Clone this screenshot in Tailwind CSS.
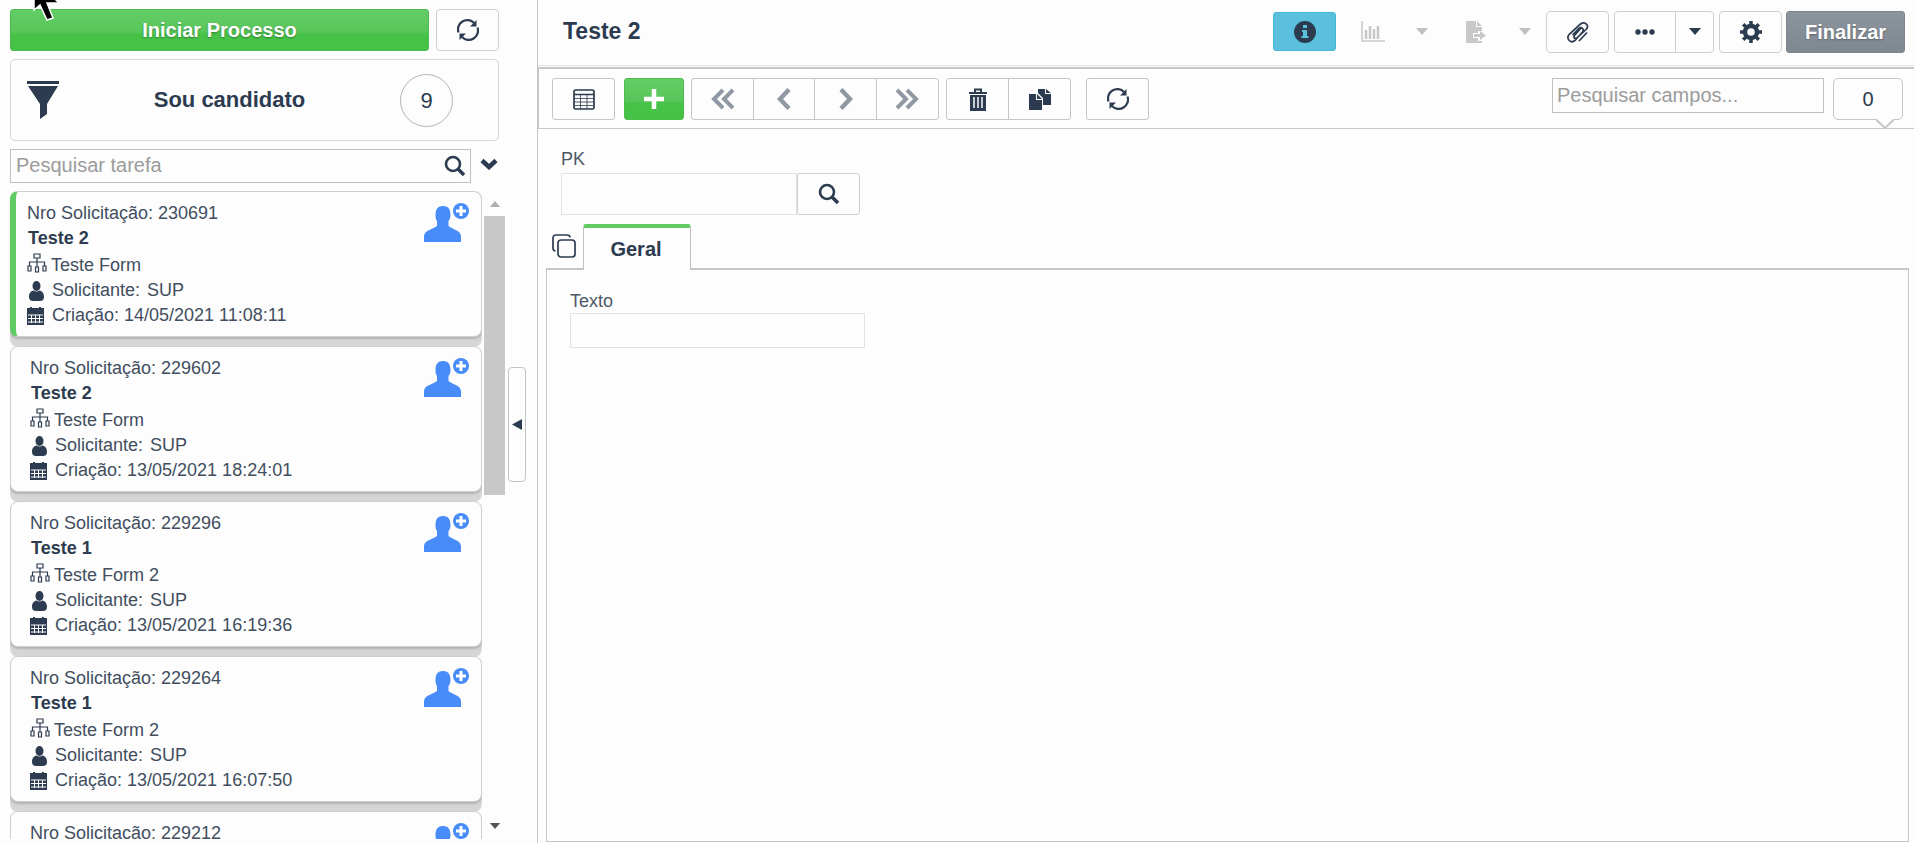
<!DOCTYPE html>
<html lang="pt-BR">
<head>
  <meta charset="UTF-8">
  <meta name="viewport" content="width=device-width, initial-scale=1.0">
  <title>Sou candidato - Teste 2</title>
  <script src="https://cdn.jsdelivr.net/npm/@tailwindcss/browser@4"></script>
</head>
<body class="relative flex h-screen overflow-hidden bg-[#fdfdfd] font-['Liberation_Sans',Arial,sans-serif] text-[18px] text-[#2c3b4f]">

  <!-- Icons -->
  <svg class="hidden">
    <symbol id="i-refresh" viewBox="0 0 22 22">
      <path d="M1.500 13.500A9.300 9.300 0 0 1 17 4M20.500 8.500A9.300 9.300 0 0 1 5 18" fill="none" stroke="currentColor" stroke-width="2.200"/>
      <path d="M19.500 1V7.500H13zM2.500 21V14.500H9z" fill="currentColor"/>
    </symbol>
    <symbol id="i-search" viewBox="0 0 22 22">
      <circle cx="9" cy="9" r="7" fill="none" stroke="currentColor" stroke-width="2.600"/>
      <path d="M13.500 13.500L20 20" stroke="currentColor" stroke-width="3.600"/>
    </symbol>
    <symbol id="i-caret" viewBox="0 0 12 7"><path d="M0 0H12L6 7z" fill="currentColor"/></symbol>
    <symbol id="i-sitemap" viewBox="0 0 20 20">
      <path d="M7 1h6v4H7zM1 13h3v5H1zM8.500 14h3v5h-3zM16 13h3v5h-3zM10 5v9M2.500 13V9h15v4" fill="none" stroke="currentColor" stroke-width="1.200"/>
    </symbol>
    <symbol id="i-user" viewBox="0 0 20 20">
      <ellipse cx="9.500" cy="5" rx="4" ry="5" fill="currentColor"/>
      <path d="M2 16c0-4 2-6 4.500-6.500q3 2 6 0c2.500.5 4.500 2.500 4.500 6.500 0 3-2 4-4 4h-7c-2 0-4-1-4-4z" fill="currentColor"/>
    </symbol>
    <symbol id="i-calendar" viewBox="0 0 20 20">
      <path d="M0 2h3V1h2v1h7V1h2v1h3v17H0z" fill="currentColor"/>
      <path d="M1 9h15M1 12.500h15M1 16h15M4.500 9v8M8.500 9v8M12.500 9v8" stroke="#fff" stroke-width="1"/>
    </symbol>
    <symbol id="i-adduser" viewBox="0 0 46 40">
      <path d="M11.500 12C11.500 6 14 3 19 3s7.500 3 7.500 9c0 3-1 5-2 6v5c3 3 12 4 12.500 10v6H0v-6c.5-6 9.500-7 13-10v-5c-1-1-1.500-3-1.500-6z" fill="currentColor"/>
      <circle cx="37" cy="8" r="8" fill="currentColor"/>
      <path d="M37 3v10M32 8h10" stroke="#fff" stroke-width="3"/>
    </symbol>
  </svg>

  <!-- Task sidebar -->
  <aside class="flex w-[538px] shrink-0 border-r border-[#c6c6c6]">
    <div class="flex w-[505px] flex-col pt-[9px] pb-1 pl-[10px]">
      <div class="flex gap-[7px] pr-[6px]">
        <button class="h-[42px] flex-1 rounded-[3px] border border-[#4abb4c] bg-linear-to-b from-[#64cd66] from-0% via-[#58c65a] via-55% to-[#46c247] to-60% text-[20px] font-bold text-white [text-shadow:0_1px_2px_rgba(0,0,0,0.35)]">Iniciar Processo</button>
        <button class="flex h-[42px] w-[63px] items-center justify-center rounded-[4px] border border-[#d0d0d0]" aria-label="Atualizar"><svg class="size-[22px]"><use href="#i-refresh"/></svg></button>
      </div>

      <div class="mt-2 mr-[6px] flex h-[82px] items-center rounded-[5px] border border-[#d6d6d6] pr-[45px] pl-4">
        <svg class="h-[38px] w-8" viewBox="0 0 32 38"><path d="M0 0H32V3H0zM1 5H31L20 23V33L13 38V23z" fill="currentColor"/></svg>
        <h2 class="flex-1 pb-[2px] text-center text-[22px] font-bold">Sou candidato</h2>
        <span class="flex size-[53px] items-center justify-center rounded-full border border-[#b4b4b4] text-[22px]">9</span>
      </div>

      <div class="mt-2 mr-[7px] flex h-[34px] items-center justify-between">
        <div class="flex h-full w-[461px] items-center border border-[#c0c0c0] pr-1 pl-[5px]">
          <input type="text" aria-label="Pesquisar tarefa" placeholder="Pesquisar tarefa" class="min-w-0 flex-1 pb-[2px] text-[20px] outline-none placeholder:text-[#9b9b9b]">
          <button aria-label="Buscar"><svg class="size-[22px]"><use href="#i-search"/></svg></button>
        </div>
        <button class="pb-1" aria-label="Expandir filtros"><svg class="h-[12px] w-[18px]" viewBox="0 0 18 12"><path d="M2 2.500L9 9L16 2.500" fill="none" stroke="currentColor" stroke-width="4.500"/></svg></button>
      </div>

      <div class="mt-2 flex min-h-0 flex-1 justify-between">
        <div id="taskList" class="w-[472px] overflow-hidden"></div>
        <div class="flex w-[21px] flex-col items-center py-[10px]">
          <svg class="h-[6px] w-[12px] rotate-180 text-[#b0b0b0]"><use href="#i-caret"/></svg>
          <div class="mt-[9px] h-[279px] w-full bg-[#c8c8c8]"></div>
          <svg class="mt-auto h-[6px] w-[12px] text-[#555]"><use href="#i-caret"/></svg>
        </div>
      </div>
    </div>
    <button class="mt-[6px] ml-[3px] flex h-[115px] w-[18px] items-center justify-center self-center rounded-[4px] border border-[#c4c4c4]" aria-label="Recolher painel">
      <svg class="h-[11px] w-[10px]" viewBox="0 0 10 11"><path d="M10 0V11L0 5.500z" fill="currentColor"/></svg>
    </button>
  </aside>

  <!-- Form -->
  <main class="flex min-w-0 flex-1 flex-col">
    <header class="flex h-[66px] shrink-0 items-center border-b border-[#e2e2e2] pr-[9px] pb-[2px] pl-[25px]">
      <h1 class="flex-1 text-[23px] font-bold">Teste 2</h1>
      <button class="flex h-[39px] w-[63px] items-center justify-center rounded-[3px] border border-[#46b8da] bg-[#5bc0de]" aria-label="Informações">
        <svg class="size-[22px]" viewBox="0 0 22 22"><circle cx="11" cy="11" r="11" fill="currentColor"/><path d="M9 4h4v3H9zM8 9h5v6h1.500v2H7.500v-2H9v-4H8z" fill="#5bc0de"/></svg>
      </button>
      <button class="ml-[25px] text-[#c8c8c8]" aria-label="Gráficos" disabled><svg class="h-[21px] w-6" viewBox="0 0 24 21"><path d="M1 0V20H24" fill="none" stroke="currentColor" stroke-width="1.500"/><path d="M5 18V9M9 18V5M13 18V8M17 18V5" stroke="currentColor" stroke-width="2.500"/></svg></button>
      <button class="ml-[31px] text-[#c0c0c0]" aria-label="Opções de gráfico" disabled><svg class="h-[7px] w-[12px]"><use href="#i-caret"/></svg></button>
      <button class="ml-[38px] text-[#c8c8c8]" aria-label="Exportar" disabled><svg class="h-[22px] w-5" viewBox="0 0 20 22"><path d="M0 0H10V6H16V10H12V12H7V17H12V20H16V22H0zM11 0L16 5H11z" fill="currentColor"/><path d="M8 13H14V10L20 14.500L14 19V16H8z" fill="currentColor"/></svg></button>
      <button class="ml-[33px] text-[#c0c0c0]" aria-label="Opções de exportação" disabled><svg class="h-[7px] w-[12px]"><use href="#i-caret"/></svg></button>
      <button class="ml-[15px] flex h-[42px] w-[63px] items-center justify-center rounded-[4px] border border-[#d0d0d0]" aria-label="Anexos">
        <svg class="size-[24px]" viewBox="0 0 24 24" fill="none" stroke="currentColor" stroke-width="1.700"><path d="M15.500 7.500L8.500 15.500c-1.500 2 .8 4 2.500 2.300L20.500 9c3-4-2-8-6-5L3.500 14C-.5 18.500 4.500 24 9 20.500L16.500 12c2-3-1-5.500-3.500-3.500L6.500 15M13 21L21 12.500"/></svg>
      </button>
      <div class="ml-[5px] flex h-[42px] rounded-[4px] border border-[#d0d0d0]">
        <button class="flex w-[60px] items-center justify-center" aria-label="Mais ações"><svg class="h-[6px] w-5" viewBox="0 0 20 6" fill="currentColor"><circle cx="3" cy="3" r="2.700"/><circle cx="10" cy="3" r="2.700"/><circle cx="17" cy="3" r="2.700"/></svg></button>
        <button class="flex w-[38px] items-center justify-center border-l border-[#d0d0d0]" aria-label="Abrir menu"><svg class="h-[7px] w-[12px]"><use href="#i-caret"/></svg></button>
      </div>
      <button class="ml-[5px] flex h-[42px] w-[63px] items-center justify-center rounded-[4px] border border-[#d0d0d0]" aria-label="Configurações">
        <svg class="size-[22px]" viewBox="0 0 22 22"><circle cx="11" cy="11" r="6" fill="none" stroke="currentColor" stroke-width="4.500"/><path d="M11 0V4M11 18V22M0 11H4M18 11H22M3.200 3.200L6 6M16 16L18.800 18.800M18.800 3.200L16 6M6 16L3.200 18.800" stroke="currentColor" stroke-width="3.500"/></svg>
      </button>
      <button class="ml-1 h-[42px] w-[119px] rounded-[3px] border border-[#7d858f] bg-linear-to-b from-[#8c949d] to-[#7f8790] text-[20px] font-bold text-white [text-shadow:0_1px_2px_rgba(0,0,0,0.3)]">Finalizar</button>
    </header>

    <div class="mt-[1px] flex h-[62px] shrink-0 items-start border-t-2 border-b border-l border-[#c6c6c6] pt-[9px] pr-[11px] pl-[13px]">
      <button class="flex h-[42px] w-[63px] items-center justify-center rounded-[3px] border border-[#c6c6c6]" aria-label="Grade">
        <svg class="h-[21px] w-[22px]" viewBox="0 0 22 21" fill="none" stroke="currentColor"><rect x="1" y="1" width="20" height="19" rx="1.500" stroke-width="1.700"/><path d="M1 5.500H21" stroke-width="1.500"/><path d="M1 9.500H21M1 13H21M1 16.500H21M7.500 5V20M14 5V20" stroke-width=".8"/></svg>
      </button>
      <button class="ml-[9px] flex h-[42px] w-[60px] items-center justify-center rounded-[3px] border border-[#4abb4c] bg-linear-to-b from-[#64cd66] from-0% via-[#58c65a] via-55% to-[#46c247] to-60% text-white" aria-label="Novo">
        <svg class="size-[20px]" viewBox="0 0 20 20"><path d="M10 0V20M0 10H20" stroke="currentColor" stroke-width="4.500"/></svg>
      </button>
      <div class="ml-[7px] flex h-[42px] divide-x divide-[#c6c6c6] rounded-[3px] border border-[#c6c6c6] text-[#9098a3]">
        <button class="flex w-[62px] items-center justify-center" aria-label="Primeiro"><svg class="h-[22px] w-[23px]" viewBox="0 0 23 22" fill="none" stroke="currentColor" stroke-width="4"><path d="M12 2L3 11L12 20M22 2L13 11L22 20"/></svg></button>
        <button class="flex w-[61px] items-center justify-center" aria-label="Anterior"><svg class="h-[22px] w-[14px]" viewBox="0 0 14 22" fill="none" stroke="currentColor" stroke-width="4.500"><path d="M12 1.500L3 11L12 20.500"/></svg></button>
        <button class="flex w-[62px] items-center justify-center" aria-label="Próximo"><svg class="h-[22px] w-[14px]" viewBox="0 0 14 22" fill="none" stroke="currentColor" stroke-width="4.500"><path d="M2 1.500L11 11L2 20.500"/></svg></button>
        <button class="flex w-[61px] items-center justify-center" aria-label="Último"><svg class="h-[22px] w-[23px]" viewBox="0 0 23 22" fill="none" stroke="currentColor" stroke-width="4"><path d="M1 2L10 11L1 20M11 2L20 11L11 20"/></svg></button>
      </div>
      <div class="ml-[7px] flex h-[42px] divide-x divide-[#c6c6c6] rounded-[3px] border border-[#c6c6c6]">
        <button class="flex w-[62px] items-center justify-center" aria-label="Excluir"><svg class="h-[23px] w-[18px]" viewBox="0 0 18 23"><path d="M6 4V1.500H12V4" fill="none" stroke="currentColor" stroke-width="2"/><path d="M0 4H18V6H0zM1 7H17V23H1z" fill="currentColor"/><path d="M5 9V20M9 9V20M13 9V20" stroke="#fdfdfd" stroke-width="1.500"/></svg></button>
        <button class="flex w-[61px] items-center justify-center" aria-label="Duplicar"><svg class="h-[21px] w-[22px]" viewBox="0 0 22 21" fill="currentColor"><path d="M0 5H7V11H13V21H0zM8 5L13 10H8zM9 0H16V5H22V16H14V9L9 4zM17 0L22 4H17z"/></svg></button>
      </div>
      <button class="ml-[15px] flex h-[42px] w-[63px] items-center justify-center rounded-[3px] border border-[#c6c6c6]" aria-label="Recarregar"><svg class="size-[22px]"><use href="#i-refresh"/></svg></button>
      <input type="text" aria-label="Pesquisar campos" placeholder="Pesquisar campos..." class="ml-auto h-[35px] w-[272px] border border-[#c0c0c0] px-1 text-[20px] outline-none placeholder:text-[#9b9b9b]">
      <div class="relative ml-[9px] flex h-[42px] w-[70px] items-center justify-center rounded-[5px] border border-[#c6c6c6] text-[20px]">
        0
        <svg class="absolute top-[39px] right-2 h-[11px] w-[18px]" viewBox="0 0 18 11"><path d="M0 1.500L9 10L18 1.500V0H0z" fill="#fdfdfd"/><path d="M0 1.500L9 10L18 1.500" fill="none" stroke="#c6c6c6" stroke-width="2"/></svg>
      </div>
    </div>

    <div class="flex min-h-0 flex-1 flex-col pr-[5px] pb-[1px] pl-2">
      <div class="pt-[18px] pl-[15px]">
        <label for="pk" class="block leading-[24px] text-[#4c5866]">PK</label>
        <div class="mt-[2px] flex h-[42px]">
          <input id="pk" type="text" class="w-[236px] border border-[#e2e2e2] px-2 outline-none">
          <button class="flex w-[63px] items-center justify-center rounded-[3px] border border-[#cfcfcf]" aria-label="Pesquisar PK"><svg class="size-[22px]"><use href="#i-search"/></svg></button>
        </div>
      </div>

      <div class="mt-2 flex h-[45px] shrink-0 items-end">
        <button class="mb-[10px] ml-[6px]" aria-label="Abas"><svg class="size-6" viewBox="0 0 24 24" fill="none" stroke="currentColor" stroke-width="1.700"><rect x="6" y="6" width="17" height="17" rx="3"/><path d="M3.500 17Q1 17 1 14V4Q1 1 4 1H15Q18 1 18 3.500"/></svg></button>
        <button class="relative -mb-[2px] ml-[7px] h-[46px] w-[108px] rounded-t-[3px] border-x border-t-4 border-x-[#c8c0c0] border-t-[#5fcb62] bg-[#fdfdfd] pr-[2px] text-[20px] font-bold">Geral</button>
      </div>
      <section class="flex-1 border border-t-2 border-[#c6c6c6] pt-[19px] pl-[23px]">
        <label for="texto" class="block leading-[24px] text-[#4c5866]">Texto</label>
        <input id="texto" type="text" class="block h-[35px] w-[295px] border border-[#e2e2e2] px-2 outline-none">
      </section>
    </div>
  </main>

  <!-- Mouse pointer -->
  <svg class="pointer-events-none absolute top-0 left-[33px] h-[21px] w-[27px]" viewBox="0 0 27 21"><path d="M1 -10V10L7 5L14 20L20 18L14 3H26L13 -10z" fill="#000" stroke="#fff" stroke-width="1.500"/></svg>

  <script>
    const tasks = [
      { number: 230691, title: 'Teste 2', form: 'Teste Form', created: '14/05/2021 11:08:11' },
      { number: 229602, title: 'Teste 2', form: 'Teste Form', created: '13/05/2021 18:24:01' },
      { number: 229296, title: 'Teste 1', form: 'Teste Form 2', created: '13/05/2021 16:19:36' },
      { number: 229264, title: 'Teste 1', form: 'Teste Form 2', created: '13/05/2021 16:07:50' },
      { number: 229212 },
    ];

    const details = task => task.title ? `
      <h3 class="pl-[1px] font-bold text-[#2c3b4f]">${task.title}</h3>
      <p class="flex items-start gap-1 pt-[2px]"><svg class="size-5 text-[#2c3b4f]"><use href="#i-sitemap"/></svg>${task.form}</p>
      <p class="flex items-center gap-[5px]"><svg class="size-5 text-[#2c3b4f]"><use href="#i-user"/></svg>Solicitante: <span class="pl-[2px]">SUP</span></p>
      <p class="flex items-center gap-[5px]"><svg class="size-5 text-[#2c3b4f]"><use href="#i-calendar"/></svg>Criação: ${task.created}</p>` : '';

    // First task is the open one
    document.getElementById('taskList').innerHTML = tasks.map((task, i) => `
      <article class="relative mb-[9px] flex h-[146px] justify-between rounded-[8px] border bg-[#fdfdfd] pt-[9px] pr-[11px] leading-[25px] text-[#414e60] shadow-[0_2px_2px_#b4b4b4,0_10px_1px_#d6d6d6] ${i === 0 ? 'border-y-[#cfcfcf] border-r-[#cfcfcf] border-l-[6px] border-l-[#5fcb62] pl-[11px]' : 'border-[#cfcfcf] pl-[19px]'}">
        <div>
          <p>Nro Solicitação: ${task.number}</p>
          ${details(task)}
        </div>
        <button class="mt-[2px] self-start text-[#478cf8]" aria-label="Assumir tarefa"><svg class="h-10 w-[46px]"><use href="#i-adduser"/></svg></button>
      </article>`).join('');
  </script>
</body>
</html>
